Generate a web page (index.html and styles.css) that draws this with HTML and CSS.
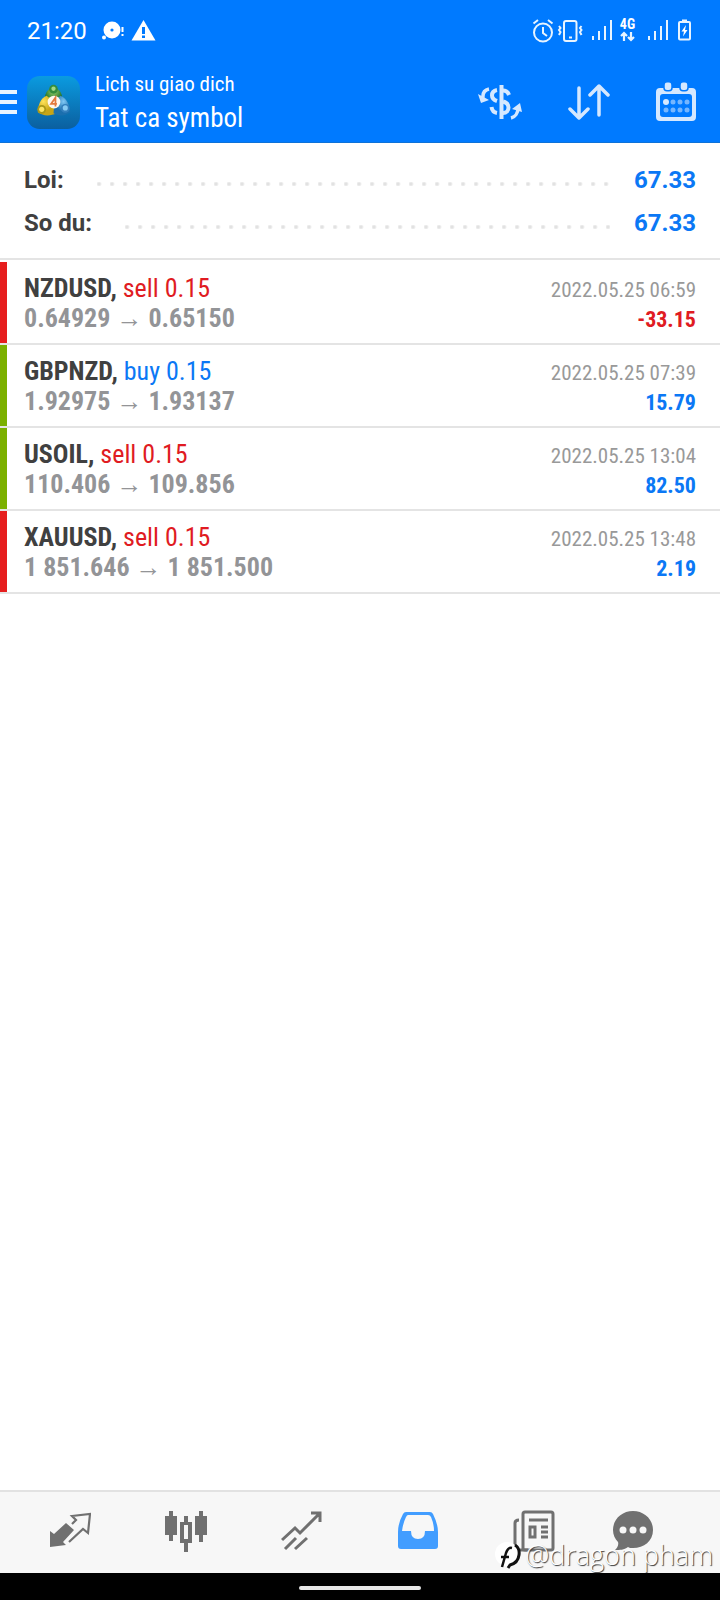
FILE: index.html
```html
<!DOCTYPE html>
<html lang="vi">
<head>
<meta charset="utf-8">
<meta name="viewport" content="width=device-width, initial-scale=1">
<title>Lich su giao dich</title>
<link rel="stylesheet" href="styles.css">
</head>
<body>
<div class="app">
  <header class="header">
    <div class="status">
      <span class="clock">21:20</span>
      <svg class="status-left" width="56" height="24" viewBox="0 0 56 24" fill="#fff">
        <circle cx="12" cy="11" r="8.500"/><circle cx="4" cy="18.500" r="2"/><circle cx="12" cy="11" r="1.600" fill="#007aff"/>
        <path d="M21.500 8h2v5h-2zM21.500 15h2v2h-2z"/>
        <path d="M43.500 1 55.500 21.500h-24z"/><path d="M42 8h3v7h-3zM42 16.500h3V19h-3z" fill="#007aff"/>
      </svg>
      <span class="spacer"></span>
      <svg class="status-right" width="160" height="34" viewBox="0 -4 160 34" fill="none" stroke="#e8f4ff" stroke-width="2">
        <circle cx="11" cy="14.500" r="9"/><path d="M11 9v6l4 3M1.500 5.500 6 2M20.500 5.500 16 2"/>
        <rect x="32" y="3" width="12.500" height="20" rx="2"/><path d="M37 19.500h3" /><path d="M27 8l1.500 2-1.500 2 1.500 2-1.500 3M49.500 8 48 10l1.500 2-1.500 2 1.500 3"/>
        <path d="M61 22v-4M67 22v-9M73 22V8M79 22V2"/>
        <path d="M92 23v-8m-3 3 3-3 3 3M99 14v8m-3-3 3 3 3-3" stroke-width="2.200"/>
        <path d="M117 22v-4M123 22v-9M129 22V8M135 22V2"/>
        <rect x="147" y="4" width="11" height="17.500" rx="1"/><path d="M150 2.500h5"/><path d="m154 7-4.500 6.500h2.500l-1 5 4.500-6.500H153z" fill="#fff" stroke="none"/>
        <text class="network" x="95.500" y="11" text-anchor="middle">4G</text>
      </svg>
    </div>
    <div class="toolbar">
      <button class="icon-button menu" aria-label="Menu"><svg width="17" height="26" viewBox="0 0 17 26" fill="#e8f3ff"><path d="M0 1h17v4H0zM0 11h17v4H0zM0 21h17v4H0z"/></svg></button>
      <svg class="logo" width="53" height="53" viewBox="0 0 54 54">
        <defs>
          <linearGradient id="tile" x2="0" y2="1"><stop stop-color="#0a9be0"/><stop offset="1" stop-color="#0b5f9f"/></linearGradient>
          <radialGradient id="green" cy=".2"><stop stop-color="#9bd36a"/><stop offset="1" stop-color="#25762d"/></radialGradient>
          <radialGradient id="gold" cx=".3" cy=".3"><stop stop-color="#ffe35a"/><stop offset="1" stop-color="#c7a517"/></radialGradient>
          <radialGradient id="azure" cx=".6" cy=".3"><stop stop-color="#7fc8f5"/><stop offset="1" stop-color="#1b6fae"/></radialGradient>
        </defs>
        <rect width="54" height="54" rx="13" fill="url(#tile)"/>
        <path d="M18 24c0-7 4-12 9-12s9 5 9 12l-9 6z" fill="url(#green)"/><circle cx="27" cy="13.500" r="4.500" fill="#348c3c"/><circle cx="27" cy="13" r="2.200" fill="#a3d884"/>
        <path d="M20 20c-6 2-9 10-9 17 5 4 13 4 19 1l-3-12z" fill="url(#gold)"/><circle cx="15" cy="34" r="4.500" fill="#a99818"/><circle cx="15" cy="34" r="2.600" fill="#fbe465"/>
        <path d="M34 20c6 2 10 10 10 17-5 4-12 4-17 1l1-12z" fill="url(#azure)"/><circle cx="39" cy="33" r="4.500" fill="#337fbd"/><circle cx="39" cy="32.500" r="2.600" fill="#87cbf4"/>
        <circle cx="27.500" cy="26.500" r="6.500" fill="#fff8ee"/><path d="M29 31v-9l-4.500 6.500h6" fill="none" stroke="#e4793d" stroke-width="1.800"/>
      </svg>
      <div class="titles">
        <div class="subtitle">Lich su giao dich</div>
        <h1 class="title">Tat ca symbol</h1>
      </div>
      <div class="actions">
        <button class="icon-button" aria-label="Symbol"><svg width="44" height="38" viewBox="0 0 44 38" fill="none" stroke="#d5e8ff" stroke-width="4">
          <path d="M23.500 2v34" stroke-width="4"/><path d="M25 7.500c3 0 5 1.500 6 4.500M25 18.500c3.500 1 5.500 3 5.500 6s-2 5.500-5.500 5.500M19 7c-3 .5-5 2.500-5 5.500s2 4.500 5 5.500M13.500 24c.5 3.500 2.500 5.500 5.500 6"/>
          <path d="M11 6C6 7 4.500 10 5 15M33 35c4-1 7-5 7-10" stroke-width="3.500"/><path d="m0 11 3 9 8-3zM34 26l8-6 2 9z" fill="#d5e8ff" stroke="none"/></svg></button>
        <button class="icon-button" aria-label="Sort"><svg width="42" height="38" viewBox="0 0 42 38" fill="none" stroke="#d5e8ff" stroke-width="3.500" stroke-linecap="round" stroke-linejoin="round"><path d="M11 5v30m-9-9 9 9 9-9M31 32V3m-9 9 9-9 9 9"/></svg></button>
        <button class="icon-button" aria-label="Calendar"><svg width="40" height="42" viewBox="0 0 40 42" fill="#d5e8ff"><path fill-rule="evenodd" d="M4 7h32q4 0 4 4v25q0 4-4 4H4q-4 0-4-4V11q0-4 4-4zm3 6q-3 0-3 3v17q0 3 3 3h26q3 0 3-3V16q0-3-3-3z"/><g stroke="#007aff" stroke-width="1.500"><rect x="8" y=".8" width="8" height="9" rx="3"/><rect x="24" y=".8" width="8" height="9" rx="3"/></g><circle cx="10" cy="21" r="3"/><g opacity=".55"><circle cx="17" cy="21" r="2.500"/><circle cx="24" cy="21" r="2.500"/><circle cx="31" cy="21" r="2.500"/><circle cx="10" cy="29" r="2.500"/><circle cx="17" cy="29" r="2.500"/><circle cx="24" cy="29" r="2.500"/><circle cx="31" cy="29" r="2.500"/></g></svg></button>
      </div>
    </div>
  </header>
  <main class="content">
    <dl class="summary">
      <div class="summary-row"><dt>Loi:</dt><dd class="dots"></dd><dd class="amount">67.33</dd></div>
      <div class="summary-row"><dt>So du:</dt><dd class="dots"></dd><dd class="amount">67.33</dd></div>
    </dl>
    <ul class="deals">
      <li class="deal loss">
        <div class="deal-main"><div class="symbol"><b>NZDUSD,</b> <span class="red">sell 0.15</span></div><div class="prices">0.64929 <span class="arrow">→</span> 0.65150</div></div>
        <div class="deal-side"><time class="date">2022.05.25 06:59</time><div class="profit red">-33.15</div></div>
      </li>
      <li class="deal gain">
        <div class="deal-main"><div class="symbol"><b>GBPNZD,</b> <span class="blue">buy 0.15</span></div><div class="prices">1.92975 <span class="arrow">→</span> 1.93137</div></div>
        <div class="deal-side"><time class="date">2022.05.25 07:39</time><div class="profit blue">15.79</div></div>
      </li>
      <li class="deal gain">
        <div class="deal-main"><div class="symbol"><b>USOIL,</b> <span class="red">sell 0.15</span></div><div class="prices">110.406 <span class="arrow">→</span> 109.856</div></div>
        <div class="deal-side"><time class="date">2022.05.25 13:04</time><div class="profit blue">82.50</div></div>
      </li>
      <li class="deal loss">
        <div class="deal-main"><div class="symbol"><b>XAUUSD,</b> <span class="red">sell 0.15</span></div><div class="prices">1 851.646 <span class="arrow">→</span> 1 851.500</div></div>
        <div class="deal-side"><time class="date">2022.05.25 13:48</time><div class="profit blue">2.19</div></div>
      </li>
    </ul>
  </main>
  <nav class="tabs">
    <button class="icon-button" aria-label="Quotes"><svg width="42" height="42" viewBox="0 0 42 42"><path d="m1 21 4 3 12-11 8 7-11 12 3 3-16 2z" fill="#707070"/><path d="m23 14 4-4-4-4 18-2-2 19-5-4-14 13" fill="none" stroke="#707070" stroke-width="2.200"/></svg></button>
    <button class="icon-button" aria-label="Charts"><svg width="42" height="42" viewBox="0 0 42 42" fill="#707070"><path d="M4 1h4v5h4v19H8v6H4v-6H0V6h4zM34 1h4v5h4v19h-4v7h-4v-7h-4V6h4z"/><path fill-rule="evenodd" d="M19 6h4v6h4v21h-4v9h-4v-9h-4V12h4zm0 9v14h4V15z"/></svg></button>
    <button class="icon-button" aria-label="Trade"><svg width="42" height="42" viewBox="0 0 42 42" fill="none" stroke="#707070" stroke-width="3"><path d="m1 30 13-12 5 5L38 4M30 3h9v9M4 39l11-11M14 39l12-11"/></svg></button>
    <button class="icon-button" aria-label="History"><svg width="40" height="42" viewBox="0 0 40 42"><path d="M8 2h24q2 0 3 2 5 10 5 18v14q0 3-3 3H3q-3 0-3-3V22Q0 13 5 4q1-2 3-2z" fill="#429dff"/><path d="M10 5h20q2 0 3 2 3 7 3 14h-9q0 8-7 8t-7-8H4q1-8 4-14 1-2 2-2z" fill="#f7f7f7"/></svg></button>
    <button class="icon-button" aria-label="News"><svg width="42" height="42" viewBox="0 0 42 42" fill="none" stroke="#707070" stroke-width="3"><rect x="10" y="2" width="30" height="38" rx="2"/><path d="M6 10q-4 0-4 3v23q0 4 4 4h9M16 10h19M28 17h7M28 22h7M28 27h7"/><rect x="17" y="17" width="5" height="10"/></svg></button>
    <button class="icon-button" aria-label="Messages"><svg width="42" height="42" viewBox="0 0 42 42"><path d="M21 1c11 0 20 8 20 19s-9 18-20 18c-2 0-4 0-5-1-4 3-8 3-13 3 2-2 4-5 3-8-3-3-5-7-5-12C1 9 10 1 21 1z" fill="#707070"/><g fill="#f7f7f7"><circle cx="11" cy="20" r="3.500"/><circle cx="21" cy="20" r="3.500"/><circle cx="31" cy="20" r="3.500"/></g></svg></button>
    <div class="watermark">
      <svg width="26" height="28" viewBox="0 0 26 28"><circle cx="12" cy="13" r="12" fill="#fff"/><path d="m7 26 4-14q2-6 6-5M6 16h8" fill="none" stroke="#111" stroke-width="2.500"/><path d="M20 4q5 3 4 10-1 8-9 10l-2 3" fill="none" stroke="#111" stroke-width="3"/></svg>
      <span>@dragon pham</span>
    </div>
  </nav>
  <footer class="system"><span class="handle"></span></footer>
</div>
</body>
</html>
```
FILE: styles.css
```css
* { box-sizing: border-box; }
body { margin: 0; background: #fff; color: #404040; font-family: "Roboto Condensed", "Liberation Sans Narrow", Roboto, sans-serif; }
svg { display: block; flex: none; }
h1, dl, dd, ul { margin: 0; padding: 0; }
.app { min-height: 100vh; display: flex; flex-direction: column; }
.icon-button { display: flex; align-items: center; justify-content: center; padding: 0; border: 0; background: none; cursor: pointer; }

.header { background: #007aff; color: #fff; border-bottom: 1px solid #0e72d8; }
.status { display: flex; align-items: center; height: 60px; padding: 2px 28px 0 27px; }
.clock { font: 24px/28px Roboto, sans-serif; }
.status-left { margin-left: 13px; }
.spacer { flex: 1; }
.network { font: 700 14px "Roboto Condensed", Roboto, sans-serif; fill: #fff; stroke: none; }
.toolbar { display: flex; align-items: center; height: 82px; padding: 2px 24px 0 0; }
.logo { margin: 0 15px 0 10px; }
.titles { flex: 1; white-space: nowrap; }
.subtitle { font-size: 21px; line-height: 32px; }
.title { font-size: 27px; font-weight: 400; line-height: 36px; }
.actions { display: flex; gap: 46px; }

.content { flex: 1; }
.summary { padding: 16px 24px 13px; border-bottom: 2px solid #e4e4e4; }
.summary-row { display: flex; align-items: center; height: 43px; font: 700 24px/43px Roboto, sans-serif; }
.dots { flex: 1; height: 4px; margin: 7px 24px 0 33px; background: radial-gradient(circle at 2px 2px, #e2e2e2 1px, transparent 3px) 0 0 / 13px 4px repeat-x; }
.amount, .blue { color: #0b78f5; }
.red { color: #e01b22; }
.deals { list-style: none; padding-top: 2px; }
.deal { display: flex; justify-content: space-between; padding-right: 24px; border-bottom: 2px solid #e4e4e4; white-space: nowrap; }
.deal::before { content: ""; width: 7px; }
.loss::before { background: #e61e1e; }
.gain::before { background: #7bb000; }
.deal-main { flex: 1; padding: 11px 0 10px 17px; font-size: 26px; line-height: 30px; }
.prices { color: #939497; font-weight: 700; }
.arrow { font-family: "Liberation Sans", sans-serif; font-weight: 400; }
.deal-side { padding: 13px 0 8px; text-align: right; line-height: 30px; }
.date { display: block; font-size: 21px; color: #999; }
.profit { font-size: 22px; font-weight: 700; }

.tabs { position: relative; display: grid; grid-template-columns: repeat(5, 58fr) 41fr; height: 83px; padding: 0 46px 4px 12px; background: #f7f7f7; border-top: 2px solid #e2e2e2; }
.watermark { position: absolute; right: 7px; bottom: 0; display: flex; align-items: center; gap: 4px; color: #fff; font: 300 27px/36px "Open Sans", "Noto Sans", sans-serif; text-shadow: 1px 1px 1px #333; white-space: nowrap; }
.system { display: flex; align-items: center; justify-content: center; height: 27px; padding-top: 3px; background: #000; }
.handle { width: 17%; height: 4px; border-radius: 2px; background: #e6e6e6; }
```
